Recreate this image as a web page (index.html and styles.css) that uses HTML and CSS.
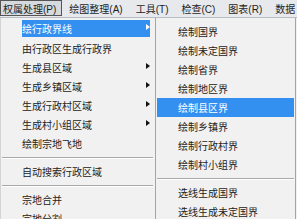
FILE: index.html
```html
<!DOCTYPE html>
<html lang="zh-CN">
<head>
<meta charset="utf-8">
<title>权属处理菜单</title>
<link rel="stylesheet" href="styles.css">
</head>
<body>
<div class="menubar">
  <span class="mb active">权属处理(P)</span>
  <span class="mb">绘图整理(A)</span>
  <span class="mb">工具(T)</span>
  <span class="mb">检查(C)</span>
  <span class="mb">图表(R)</span>
  <span class="mb">数据</span>
</div>
<div class="menus">
  <ul class="menu main">
    <li class="item sel">绘行政界线<i class="arr"></i></li>
    <li class="item">由行政区生成行政界</li>
    <li class="item">生成县区域<i class="arr"></i></li>
    <li class="item">生成乡镇区域<i class="arr"></i></li>
    <li class="item">生成行政村区域<i class="arr"></i></li>
    <li class="item">生成村小组区域<i class="arr"></i></li>
    <li class="item">绘制宗地飞地</li>
    <li class="sep"></li>
    <li class="item">自动搜索行政区域</li>
    <li class="sep"></li>
    <li class="item">宗地合并</li>
    <li class="item">宗地分割</li>
  </ul>
  <ul class="menu sub">
    <li class="item">绘制国界</li>
    <li class="item">绘制未定国界</li>
    <li class="item">绘制省界</li>
    <li class="item">绘制地区界</li>
    <li class="item sel">绘制县区界</li>
    <li class="item">绘制乡镇界</li>
    <li class="item">绘制行政村界</li>
    <li class="item">绘制村小组界</li>
    <li class="sep"></li>
    <li class="item">选线生成国界</li>
    <li class="item">选线生成未定国界</li>
  </ul>
</div>
</body>
</html>
```
FILE: styles.css
```css
html, body {
  margin: 0;
  padding: 0;
}
body {
  width: 297px;
  height: 219px;
  overflow: hidden;
  background: #f1f1f1;
  font-family: "Liberation Sans", "Noto Sans CJK SC", sans-serif;
  font-size: 10px;
  color: #222;
}
.menubar {
  display: flex;
  gap: 4px;
  height: 17px;
  background: #e7e9ec;
  box-sizing: border-box;
}
.mb {
  display: flex;
  align-items: center;
  height: 16px;
  box-sizing: border-box;
  padding: 0 5px 0 2px;
  border: 1px solid transparent;
  white-space: nowrap;
  color: #1e1e1e;
}
.mb.active {
  background: #d6d9dd;
  border-color: #555;
}
.menus {
  display: flex;
  align-items: flex-start;
  border-top: 1px solid #b9bcc0;
}
.menu {
  list-style: none;
  margin: 0;
  box-sizing: border-box;
  background: #f1f1f1;
}
.main {
  width: 156px;
  height: 210px;
  padding: 2px 2px 0 1px;
  border-left: 1px solid #d4d4d4;
  border-right: 1px solid #a4a4a4;
}
.sub {
  width: 140px;
  height: 210px;
  padding: 4px 1px 0 1px;
  border-right: 1px solid #a4a4a4;
}
.item {
  display: flex;
  align-items: center;
  height: 19px;
  box-sizing: border-box;
  padding: 0 3px 0 20px;
  white-space: nowrap;
}
.sub .item {
  padding-left: 21px;
}
.item.sel {
  background: #3490f0;
  color: #fff;
}
.main .item.sel {
  padding-bottom: 2px;
  background-clip: content-box;
}
.arr {
  margin-left: auto;
  margin-top: -3px;
  width: 0;
  height: 0;
  border-style: solid;
  border-width: 3px 0 3px 4px;
  border-color: transparent transparent transparent #111;
}
.sel .arr {
  border-left-color: #fff;
}
.sep {
  display: flex;
  align-items: center;
  height: 9px;
}
.sep::before {
  content: "";
  flex: 1;
  border-top: 1px solid #a9a9a9;
  border-bottom: 1px solid #fff;
}
```
